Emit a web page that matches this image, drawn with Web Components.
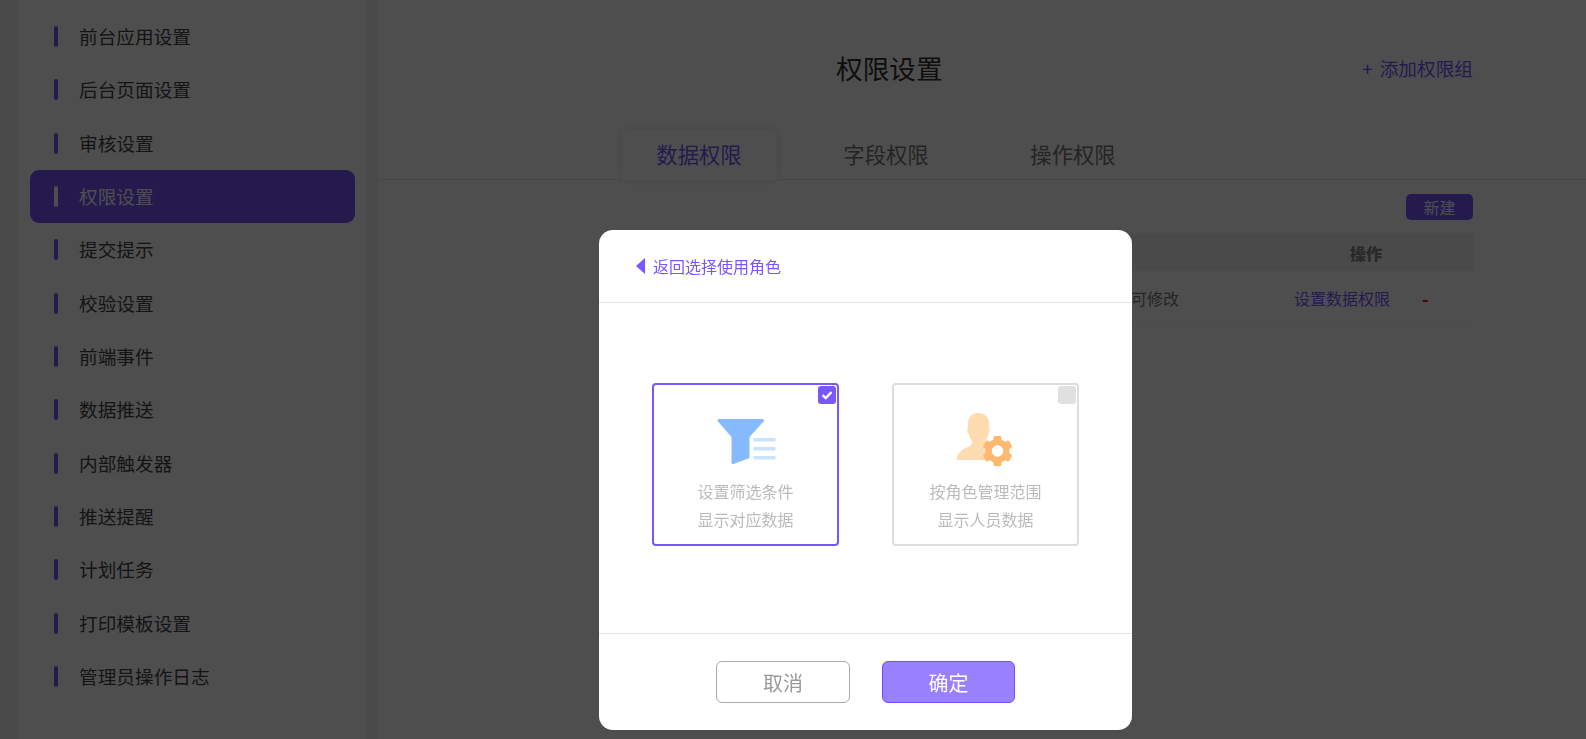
<!DOCTYPE html>
<html lang="zh-CN"><head><meta charset="utf-8">
<style>
html,body{margin:0;height:100%;overflow:hidden;background:#fff}
body{font-family:"Noto Sans CJK SC","Liberation Sans",sans-serif;color:#222}
</style></head><body>
<perm-app></perm-app>
<script>
const P='#7a56ff';
function def(name,html){customElements.define(name,class extends HTMLElement{constructor(){super();this.attachShadow({mode:'open'}).innerHTML=html;}})}
def('side-item',`<style>
:host{display:flex;align-items:center;height:53.33px;margin:0 11px;padding-left:24px;gap:21px;border-radius:9px;font-size:18.67px;color:#444;box-sizing:border-box}
:host([active]){background:${P};color:#fff}
i{width:4px;height:21px;border-radius:2px;background:${P};flex:none}
:host([active]) i{background:#fff}
span{margin-bottom:2px}
</style><i></i><span><slot></slot></span>`);
def('side-bar',`<style>
:host{display:block;width:347px;margin-left:19px;box-sizing:border-box;padding-top:10px;background:#fff;flex:none}
</style><slot></slot>`);
def('tab-bar',`<style>
:host{display:flex;gap:32px;padding-left:244px;height:50px;margin-top:42px;border-bottom:1px solid #e8e8e8;font-size:21.33px}
</style><slot></slot>`);
def('tab-item',`<style>
:host{display:flex;align-items:center;justify-content:center;width:155px;height:51px;color:#777;box-sizing:border-box;padding:0 1px 3px 0}
:host([active]){color:${P};background:#fff;border-radius:3px 3px 0 0;box-shadow:0 0 8px rgba(0,0,0,.12)}
</style><slot></slot>`);
def('perm-main',`<style>
:host{display:block;flex:1;min-width:0;background:#fff;margin-left:12px}
header{display:flex;align-items:center;height:40px;margin-top:47px;padding:0 113px 0 458px}
h1{margin:0;font-size:26.67px;font-weight:400;color:#333}
.add{margin-left:auto;font-size:18.67px;color:${P};word-spacing:3px}
.bar{display:flex;justify-content:flex-end;padding:14px 113px 0 0}
.new{display:flex;align-items:center;justify-content:center;width:67px;height:26px;border-radius:5px;background:${P};color:#fff;font-size:16px}
.tbl{margin:14px 113px 0 400px;font-size:16px}
.h,.r{display:grid;align-items:center}
.h{height:37px;background:#f0f0f0;font-weight:700;color:#888;grid-template-columns:1fr 32px 91px}
.h b{grid-column:2;white-space:nowrap}
.r{height:54px;border-bottom:1px solid #f5f5f5;color:#777;grid-template-columns:1fr 115px 96px 32px 51px}
.m{grid-column:1;justify-self:end}
.link{grid-column:3;color:${P};white-space:nowrap}
.red{grid-column:5;color:#ff0000;font-size:18px;font-weight:700}
</style><header><h1>权限设置</h1><div class="add">+ 添加权限组</div></header>
<slot></slot>
<div class="bar"><div class="new">新建</div></div>
<div class="tbl"><div class="h"><b>操作</b></div><div class="r"><span class="m">可修改</span><span class="link">设置数据权限</span><span class="red">-</span></div></div>`);
def('choice-card',`<style>
:host{display:flex;flex-direction:column;align-items:center;position:relative;width:187px;height:163px;box-sizing:border-box;border:2px solid #ddd;border-radius:4px;padding-top:34px;font-size:16px;line-height:28px;color:#bbb;text-align:center}
:host([checked]){border-color:${P}}
.c{position:absolute;right:1px;top:1px;width:18px;height:18px;border-radius:3px;background:#e0e0e0;display:flex;align-items:center;justify-content:center}
:host([checked]) .c{background:${P}}
.c svg{display:none}:host([checked]) .c svg{display:block}
.t{margin-top:12px}
::slotted(svg){display:block;overflow:visible}
</style><div class="c"><svg width="12" height="12" viewBox="0 0 12 12"><path d="M1.500 6.200l3.200 2.900 5.800-6" fill="none" stroke="#fff" stroke-width="2.400"/></svg></div><slot name="icon"></slot><div class="t"><slot></slot></div>`);
def('perm-modal',`<style>
:host{position:fixed;left:599px;top:230px;width:533px;height:500px;background:#fff;border-radius:14px;display:flex;flex-direction:column;overflow:hidden}
.hd{height:73px;box-sizing:border-box;flex:none;border-bottom:1px solid #e4e4e4;display:flex;align-items:center;padding-left:37px;gap:8px;color:${P};font-size:16px}
.hd svg{display:block}
.bd{flex:1;display:flex;gap:53px;padding:80px 0 0 53px;box-sizing:border-box}
.ft{height:97px;flex:none;border-top:1px solid #e4e4e4;display:flex;padding:27px 0 0 117px;gap:32px;box-sizing:border-box}
button{width:134px;height:42px;border-radius:6px;font:20px "Noto Sans CJK SC",sans-serif;box-sizing:border-box;background:#fff;border:1px solid #aaa;color:#999;padding:0}
button.ok{width:133px;background:#9980ff;border-color:#6e4fff;color:#fff}
</style><div class="hd"><svg width="9" height="16" viewBox="0 0 9 16"><path d="M9 0v16L0 8z" fill="${P}"/></svg><span>返回选择使用角色</span></div>
<div class="bd"><slot></slot></div>
<div class="ft"><button>取消</button><button class="ok">确定</button></div>`);
def('perm-app',`<style>
:host{display:flex;height:739px;background:#f0f0f0}
.ov{position:fixed;inset:0;background:rgba(0,0,0,.695)}
</style><slot></slot><div class="ov"></div><slot name="top"></slot>`);
</script>
<script>
const app=document.querySelector('perm-app');
const items=['前台应用设置','后台页面设置','审核设置','权限设置','提交提示','校验设置','前端事件','数据推送','内部触发器','推送提醒','计划任务','打印模板设置','管理员操作日志'];
const gear=[0,60,120].map(a=>`<rect x="-4" y="-15" width="8" height="30" rx="1.500" transform="rotate(${a})"/>`).join('');
app.innerHTML=`<side-bar>${items.map((t,i)=>`<side-item ${i==3?'active':''}>${t}</side-item>`).join('')}</side-bar>
<perm-main><tab-bar><tab-item active>数据权限</tab-item><tab-item>字段权限</tab-item><tab-item>操作权限</tab-item></tab-bar></perm-main>
<perm-modal slot="top">
<choice-card checked><svg slot="icon" width="60" height="46" viewBox="1 0 60 46"><path d="M4 0h43.500a1.500 1.500 0 0 1 1 2.600L34.500 18v21L18.500 45a1.500 1.500 0 0 1-2-1.500V18L3 2.600A1.500 1.500 0 0 1 4 0z" fill="#85baff"/><path d="M38.500 19h22v3.500h-22zM38.500 28h22v3.500h-22zM38.500 37h22v3.500h-22z" fill="#cce3ff"/></svg>设置筛选条件<br>显示对应数据</choice-card>
<choice-card><svg slot="icon" width="60" height="54" viewBox="0 0 60 54" style="margin-top:-6px;margin-bottom:-2px"><path d="M.5 47C1.500 40 6 36 12 34c3-1 4-3 4-6-2-2-3-5-3.500-8-1.500-.5-1.500-4-.5-5C11 5 15 0 22.500 0S34 5 33 15c1 1 1 4.500-.5 5-.5 3-1.500 6-3.500 8 0 3 1 5 4 6v13z" fill="#ffdcb0"/><g transform="translate(41.500 38)" fill="#ffb870"><circle r="12"/>${gear}<circle r="5.800" fill="#fff"/></g></svg>按角色管理范围<br>显示人员数据</choice-card>
</perm-modal>`;
</script>
</body></html>
